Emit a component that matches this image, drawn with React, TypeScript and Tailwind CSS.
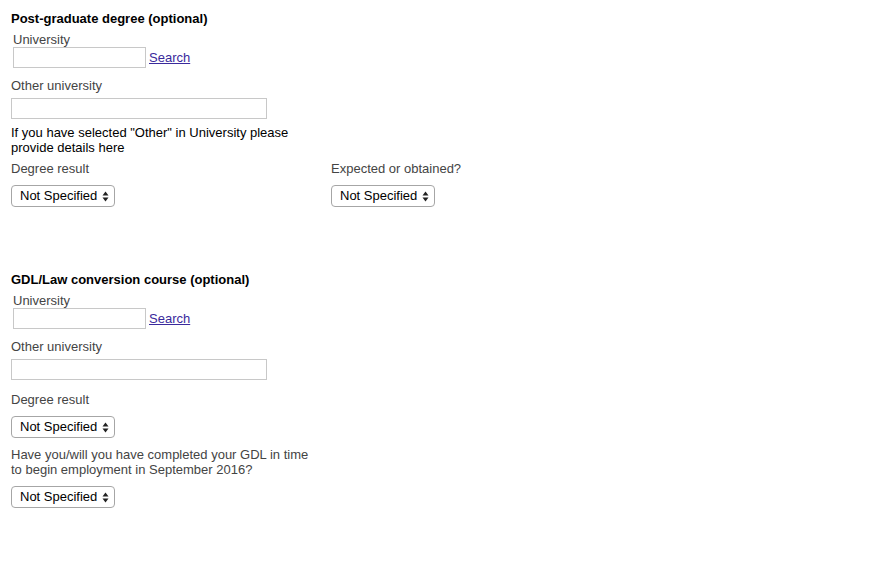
import React from "react";

function Select() {
  return (
    <div className="relative w-[104px] h-[22px] rounded-[4px] border border-[#a6a6a6] bg-white flex items-center pl-[8px] pb-[1px] text-[13px] text-black leading-none">
      <span>Not Specified</span>
      <svg className="absolute right-[5px] top-[5px]" width="7" height="11" viewBox="0 0 7 11">
        <path d="M3.5 0.5 L6.5 4.5 L0.5 4.5 Z" fill="#222" />
        <path d="M3.5 10.5 L6.5 6.5 L0.5 6.5 Z" fill="#222" />
      </svg>
    </div>
  );
}

function Label({ children, className = "" }: { children: React.ReactNode; className?: string }) {
  return <div className={`text-[13px] leading-[15px] text-[#444] ${className}`}>{children}</div>;
}

function UniversityBlock() {
  return (
    <>
      <Label className="ml-[2px] mt-[6px]">University</Label>
      <div className="flex items-center ml-[2px]">
        <div className="w-[133px] h-[21px] border border-[#c8c8c8] bg-white" />
        <a className="ml-[3px] text-[13px] leading-[15px] text-[#3a2a9c] underline">Search</a>
      </div>
      <Label className="mt-[10px]">Other university</Label>
      <div className="mt-[5px] w-[256px] h-[21px] border border-[#c8c8c8] bg-white" />
    </>
  );
}

export default function App() {
  return (
    <div
      className="w-[891px] h-[563px] bg-white pl-[11px] pt-[11px]"
      style={{ fontFamily: '"Liberation Sans", Arial, sans-serif' }}
    >
      <div className="text-[13px] leading-[15px] font-bold text-black">Post-graduate degree (optional)</div>
      <UniversityBlock />
      <div className="mt-[6px] text-[13px] leading-[15px] text-black">
        If you have selected "Other" in University please
        <br />
        provide details here
      </div>
      <div className="mt-[6px] flex">
        <div className="w-[320px]">
          <Label>Degree result</Label>
          <div className="mt-[9px]">
            <Select />
          </div>
        </div>
        <div>
          <Label>Expected or obtained?</Label>
          <div className="mt-[9px]">
            <Select />
          </div>
        </div>
      </div>

      <div className="mt-[65px] text-[13px] leading-[15px] font-bold text-black">GDL/Law conversion course (optional)</div>
      <UniversityBlock />
      <Label className="mt-[12px]">Degree result</Label>
      <div className="mt-[9px]">
        <Select />
      </div>
      <Label className="mt-[9px]">
        Have you/will you have completed your GDL in time
        <br />
        to begin employment in September 2016?
      </Label>
      <div className="mt-[9px]">
        <Select />
      </div>
    </div>
  );
}
